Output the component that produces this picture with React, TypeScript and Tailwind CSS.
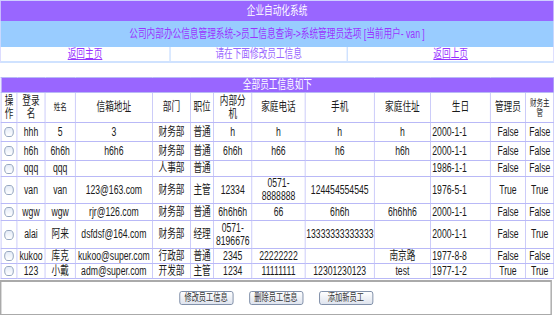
import React from "react";

const FONT = "[font-family:'Liberation_Sans','Noto_Sans_CJK_SC',sans-serif]";

type Row = { h: string; d: string[] };

const rows: Row[] = [
  { h: "h-[19px]", d: ["hhh", "5", "3", "财务部", "普通", "h", "h", "h", "h", "2000-1-1", "False", "False"] },
  { h: "h-[19px]", d: ["h6h", "6h6h", "h6h6", "财务部", "普通", "6h6h", "h66", "h6", "h6h", "2000-1-1", "False", "False"] },
  { h: "h-[16px]", d: ["qqq", "qqq", "", "人事部", "普通", "", "", "", "", "1986-1-1", "False", "False"] },
  { h: "h-[26px]", d: ["van", "van", "123@163.com", "财务部", "主管", "12334", "0571-8888888", "124454554545", "", "1976-5-1", "True", "True"] },
  { h: "h-[17px]", d: ["wgw", "wgw", "rjr@126.com", "财务部", "普通", "6h6h6h", "66", "6h6h", "6h6hh6", "2000-1-1", "False", "False"] },
  { h: "h-[28px]", d: ["alai", "阿来", "dsfdsf@164.com", "财务部", "经理", "0571-8196676", "", "13333333333333", "", "2000-1-1", "False", "True"] },
  { h: "h-[15px]", d: ["kukoo", "库克", "kukoo@super.com", "行政部", "普通", "2345", "22222222", "", "南京路", "1977-8-8", "False", "False"] },
  { h: "h-[15px]", d: ["123", "小戴", "adm@super.com", "开发部", "主管", "1234", "11111111", "12301230123", "test", "1977-1-2", "True", "True"] },
];

function Radio() {
  return (
    <span className="inline-block w-[13px] h-[10px] rounded-full border border-[#8597b5] bg-gradient-to-b from-[#e4ebf7] to-white align-middle" />
  );
}

function Btn({ children }: { children: React.ReactNode }) {
  return (
    <button className="h-[14px] w-[75px] rounded-[3px] border border-[#6d7f9c] bg-gradient-to-b from-white to-[#dfe4ee] text-[10px] leading-[12px] text-[#333]">
      {children}
    </button>
  );
}

const td = "border border-[#b9b9f7] px-[1px] py-0 text-center align-middle";

export default function App() {
  return (
    <div className={`w-[554px] h-[315px] overflow-hidden bg-white ${FONT} text-[12px] leading-[13px] text-[#1a1a1a]`}>
      <div className="w-[769px] origin-top-left [transform:scaleX(0.7205)]">
        {/* top header */}
        <div className="border-t border-x border-[#cfcfff]">
          <div className="h-[20px] bg-[#9966ff] text-white flex items-center justify-center">企业自动化系统</div>
          <div className="h-[26px] bg-[#99ccff] text-[#9933ff] flex items-center justify-center">
            公司内部办公信息管理系统-&gt;员工信息查询-&gt;系统管理员选项 [当前用户- van ]
          </div>
          <div className="h-[16px] grid grid-cols-[236px_246px_1fr] border-b-2 border-[#cfe2ff]">
            <div className="flex items-center justify-center border-r-2 border-[#cfe2ff]">
              <span className="text-[#9933ff] underline">返回主页</span>
            </div>
            <div className="flex items-center justify-center border-r-2 border-[#cfe2ff] text-[#9966ff]">
              请在下面修改员工信息
            </div>
            <div className="flex items-center justify-center">
              <span className="text-[#9933ff] underline">返回上页</span>
            </div>
          </div>
        </div>
        <div className="h-[14px]" />
        {/* main table */}
        <div className="px-[1px]">
          <table className="w-[767px] table-fixed border-collapse border border-[#b9b9f7]">
            <colgroup>
              <col className="w-[22px]" />
              <col className="w-[39px]" />
              <col className="w-[42px]" />
              <col className="w-[107px]" />
              <col className="w-[53px]" />
              <col className="w-[32px]" />
              <col className="w-[53px]" />
              <col className="w-[74px]" />
              <col className="w-[96px]" />
              <col className="w-[78px]" />
              <col className="w-[83px]" />
              <col className="w-[49px]" />
              <col className="w-[39px]" />
            </colgroup>
            <tbody>
              <tr className="h-[15px]">
                <td colSpan={13} className="border border-[#b9b9f7] bg-[#9966ff] text-white text-center p-0">
                  全部员工信息如下
                </td>
              </tr>
              <tr className="h-[30px]">
                <td className={td}>操<br />作</td>
                <td className={td}>登录<br />名</td>
                <td className={`${td} text-[9px]`}>姓名</td>
                <td className={td}>信箱地址</td>
                <td className={td}>部门</td>
                <td className={td}>职位</td>
                <td className={td}>内部分<br />机</td>
                <td className={td}>家庭电话</td>
                <td className={td}>手机</td>
                <td className={td}>家庭住址</td>
                <td className={td}>生日</td>
                <td className={td}>管理员</td>
                <td className={`${td} text-[9px] leading-[10px]`}>财务主<br />管</td>
              </tr>
              {rows.map((r, i) => (
                <tr key={i} className={r.h}>
                  <td className={td}><Radio /></td>
                  {r.d.map((v, j) => (
                    <td
                      key={j}
                      className={
                        j === 9
                          ? "border border-[#b9b9f7] pl-[2px] py-0 text-left align-middle"
                          : td
                      }
                    >
                      {v.startsWith("0571-") ? (
                        <>
                          0571-
                          <br />
                          {v.slice(5)}
                        </>
                      ) : (
                        v
                      )}
                    </td>
                  ))}
                </tr>
              ))}
            </tbody>
          </table>
        </div>
        {/* bottom buttons */}
        <div className="mt-[1px] w-[766px] h-[36px] border-2 border-[#aaaaaa] flex items-center justify-center gap-[22px]">
          <Btn>修改员工信息</Btn>
          <Btn>删除员工信息</Btn>
          <Btn>添加新员工</Btn>
        </div>
      </div>
    </div>
  );
}
